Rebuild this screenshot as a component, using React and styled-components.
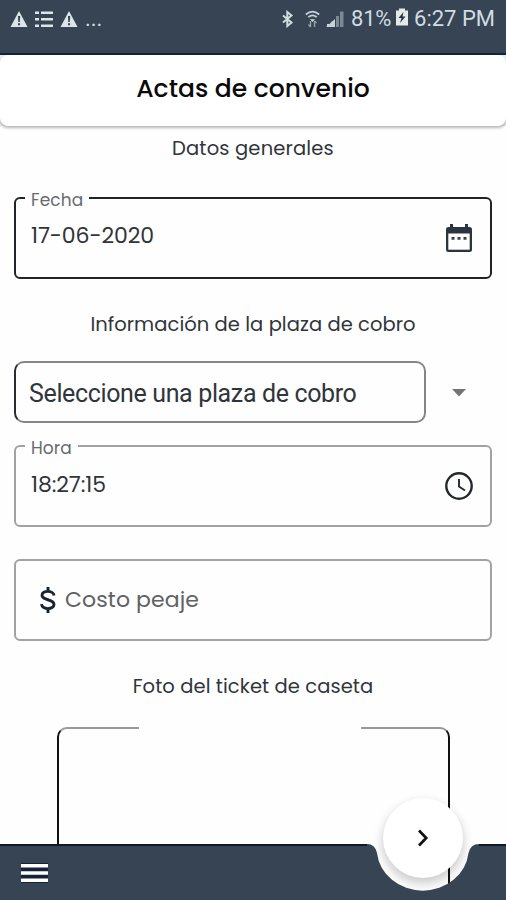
import React from 'react'
import styled, { createGlobalStyle } from 'styled-components';

const GlobalStyle = createGlobalStyle`
*, *::before, *::after{
    box-sizing: border-box;
}
body{
    margin: 0;
    background-color: #fefefe;
    font-family: 'Poppins', 'Inter', sans-serif;
    color: #30353b;
}
`

const Screen = styled.div`
position: relative;
width: 506px;
height: 900px;
overflow: hidden;
display: flex;
flex-direction: column;
background-color: #fefefe;
`

const StatusBar = styled.div`
flex: none;
height: 55px;
padding: 8px 11px 0 10px;
display: flex;
justify-content: space-between;
align-items: flex-start;
background-color: #364453;
border-bottom: 2px solid #10253d;
color: #d0dce2;
font-family: 'Roboto', sans-serif;
font-size: 22px;
line-height: 22px;
`

const StatusGroup = styled.div`
display: flex;
align-items: center;
height: 22px;
gap: ${props => props.$gap || '0'};
`

const StatusText = styled.span`
white-space: nowrap;
letter-spacing: ${props => props.$spacing || '0'};
margin-left: ${props => props.$left || '0'};
`

const HeaderArea = styled.header`
flex: none;
height: 71px;
background-color: #e9edf0;
`

const Header = styled.div`
height: 71px;
padding-bottom: 4px;
display: flex;
align-items: center;
justify-content: center;
background-color: #fff;
border-radius: 8px;
box-shadow: 0 2px 3px rgba(0, 0, 0, 0.28);
`

const Title = styled.h1`
margin: 0;
font-size: 25px;
line-height: 33px;
font-weight: 500;
letter-spacing: 0.03px;
color: #0a0a0a;
`

const Content = styled.main`
flex: 1;
min-height: 0;
display: flex;
flex-direction: column;
padding: 9px 14px 0;
`

const SectionTitle = styled.h2`
flex: none;
margin: ${props => props.$margin || '0'};
font-size: 19.5px;
line-height: 28px;
font-weight: 400;
text-align: center;
white-space: nowrap;
letter-spacing: ${props => props.$spacing};
`

const Field = styled.div`
position: relative;
flex: none;
height: 82px;
margin-top: ${props => props.$top};
padding: ${props => props.$padding || '0 17px 0 15px'};
display: flex;
align-items: center;
justify-content: space-between;
border: 2px solid ${props => props.$active ? '#202327' : '#a2a2a2'};
border-radius: 6px;
`

const FieldLabel = styled.span`
position: absolute;
top: -10px;
left: 9px;
padding: 0 6px 0 6px;
background-color: #fefefe;
font-size: 17px;
line-height: 22px;
letter-spacing: ${props => props.$spacing};
color: #686b6e;
`

const Value = styled.span`
font-size: 22px;
line-height: 28px;
letter-spacing: ${props => props.$spacing};
padding-bottom: ${props => props.$bottom || '4px'};
`

const Placeholder = styled(Value)`
flex: 1;
padding: 0 0 1px 9px;
color: #606264;
`

const SelectRow = styled.div`
flex: none;
display: flex;
align-items: center;
justify-content: space-between;
margin-top: 22px;
padding-right: 26px;
`

const Select = styled.div`
width: 412px;
height: 62px;
padding: 3px 13px 0;
display: flex;
align-items: center;
border: 2px solid #858585;
border-left-color: #292b2e;
border-radius: 10px;
font-family: 'Roboto', sans-serif;
font-size: 25px;
letter-spacing: -0.36px;
white-space: nowrap;
`

const PhotoFrame = styled.div`
flex: none;
position: relative;
width: 393px;
height: 240px;
margin: 26px 0 0 43px;
border: 2px solid #111;
border-top-color: #999;
border-radius: 10px;
`

const FrameGap = styled.div`
position: absolute;
top: -2px;
left: 80px;
width: 222px;
height: 2px;
background-color: #fefefe;
`

const BottomBar = styled.nav`
position: absolute;
left: 0;
right: 0;
bottom: 0;
height: 56px;
display: flex;
`

const BarPart = styled.div`
width: ${props => props.$width || 'auto'};
flex: ${props => props.$width ? 'none' : '1'};
padding-left: 21px;
display: flex;
align-items: center;
background-color: #364453;
border-top: 2px solid #10192b;
`

const NextButton = styled.button`
position: absolute;
left: 383px;
top: 798px;
width: 80px;
height: 80px;
padding: 0;
border: none;
border-radius: 50%;
display: flex;
align-items: center;
justify-content: center;
background-color: #fff;
box-shadow: 0 4px 8px rgba(0, 0, 0, 0.12), 0 6px 12px 2px rgba(0, 0, 0, 0.09);
`

const Notch = styled.svg`
flex: none;
display: block;
`

const Warning = () => (
    <svg width="18" height="18" viewBox="0 0 18 18">
        <path d="M9 1L17.5 17H.5z" fill="#dce6ea" />
        <path d="M8 6h2.2l-.4 6H8.3zM8 13.3h2.1v2H8z" fill="#364453" />
    </svg>
)

const List = () => (
    <svg width="18" height="18" viewBox="0 0 18 18">
        <path d="M0 1.5h4V4H0zM6 1.5h12V4H6zM0 8h4v2.5H0zM6 8h12v2.5H6zM0 14.5h4V17H0zM6 14.5h12V17H6z" fill="#dce6ea" />
    </svg>
)

const Bluetooth = () => (
    <svg width="13" height="18" viewBox="0 0 13 18">
        <path d="M2 5.5l8.500 7-4.200 3.500V2l4.200 3.500-8.500 7" fill="none" stroke="#d0dce2" strokeWidth="2" />
    </svg>
)

const Wifi = () => (
    <svg width="15" height="18" viewBox="0 0 15 18">
        <path d="M.8 4.5Q7.5-1.2 14.2 4.5M3.3 7.2Q7.5 3.6 11.7 7.2" fill="none" stroke="#c5d1d6" strokeWidth="1.7" />
        <path d="M5 9.2h5L7.5 12z" fill="#d0dce2" />
        <path d="M5.5 11v6M3.5 14.5l2 2.5M9.5 17v-6M11.5 13l-2-2" fill="none" stroke="#94a1aa" strokeWidth="1.4" />
    </svg>
)

const Signal = () => (
    <svg width="18" height="18" viewBox="0 0 18 18">
        <path d="M1 14h3v3H1zM5.5 11.5H9V17H5.5z" fill="#d0dce2" />
        <path d="M10 6h3v11h-3zM14 1.5h3.5V17H14z" fill="#7b8993" />
        <path d="M0 17L9 9v8z" fill="#c7d2d7" />
    </svg>
)

const Battery = () => (
    <svg width="12" height="18" viewBox="0 0 12 18">
        <path d="M0 2.5h3V.5h6v2h3v15H0z" fill="#e5e9e8" />
        <path d="M7.5 4l-5 6h3L4 15l5.500-6.500h-3z" fill="#27333f" />
    </svg>
)

const Calendar = () => (
    <svg width="27" height="30" viewBox="0 0 27 30">
        <path d="M4 1h3v3h12V1h3v3h1.500Q26 4 26 6.500v20Q26 29 23.500 29h-21Q0 29 0 26.500v-20Q0 4 2.500 4H4z" fill="#2c3442" />
        <path d="M2.300 10.500h21.400v16.200H2.300z" fill="#fefefe" />
        <path d="M5.500 14h3v2.800h-3zM11.500 14h3v2.800h-3zM17.500 14h3v2.800h-3z" fill="#3b4149" />
    </svg>
)

const Clock = () => (
    <svg width="28" height="28" viewBox="0 0 28 28">
        <circle cx="14" cy="14" r="12.7" fill="none" stroke="#24282d" strokeWidth="2.4" />
        <path d="M14 7v7.500l6 4" fill="none" stroke="#24282d" strokeWidth="1.9" />
    </svg>
)

const Caret = () => (
    <svg width="14" height="10" viewBox="0 0 14 10">
        <path d="M0 2h14L7 9.500z" fill="#747474" />
    </svg>
)

const Dollar = () => (
    <svg width="16" height="26" viewBox="0 0 16 26">
        <path d="M14 8.500C13.500 3 2 3 2 8.300 2 14 14 11.500 14 17.500 14 23 2 23 1.500 17.200M8 0v5M8 21v5" fill="none" stroke="#172331" strokeWidth="2.9" />
    </svg>
)

const Menu = () => (
    <svg width="27" height="20" viewBox="0 0 27 20">
        <path d="M0 0h27v20H0z" fill="#14233a" />
        <path d="M0 1h27v3.500H0zM0 8.200h27v3.500H0zM0 15.400h27v3.500H0z" fill="#fff" />
    </svg>
)

const Chevron = () => (
    <svg width="12" height="18" viewBox="0 0 12 18">
        <path d="M2 1.500L9.200 9 2 16.500" fill="none" stroke="#111" strokeWidth="2.7" />
    </svg>
)

const App = () => {
    return (
        <Screen>
            <GlobalStyle />
            <StatusBar>
                <StatusGroup $gap="7px">
                    <Warning />
                    <List />
                    <Warning />
                    <StatusText>...</StatusText>
                </StatusGroup>
                <StatusGroup>
                    <StatusGroup $gap="6px">
                        <StatusGroup $gap="11px">
                            <Bluetooth />
                            <Wifi />
                        </StatusGroup>
                        <Signal />
                    </StatusGroup>
                    <StatusText $left="7px" $spacing="-0.3px">81%</StatusText>
                    <StatusText $left="5px"><Battery /></StatusText>
                    <StatusText $left="6px">6:27 PM</StatusText>
                </StatusGroup>
            </StatusBar>
            <HeaderArea>
                <Header>
                    <Title>Actas de convenio</Title>
                </Header>
            </HeaderArea>
            <Content>
                <SectionTitle $spacing="0.17px">Datos generales</SectionTitle>
                <Field $active $top="34px">
                    <FieldLabel $spacing="0.1px">Fecha</FieldLabel>
                    <Value $spacing="-0.1px">17-06-2020</Value>
                    <Calendar />
                </Field>
                <SectionTitle $margin="32px 0 0" $spacing="0.06px">Información de la plaza de cobro</SectionTitle>
                <SelectRow>
                    <Select>Seleccione una plaza de cobro</Select>
                    <Caret />
                </SelectRow>
                <Field $top="22px">
                    <FieldLabel $spacing="0.1px">Hora</FieldLabel>
                    <Value $spacing="-0.1px" $bottom="2px">18:27:15</Value>
                    <Clock />
                </Field>
                <Field $top="32px" $padding="0 17px 0 24px">
                    <Dollar />
                    <Placeholder $spacing="0.1px">Costo peaje</Placeholder>
                </Field>
                <SectionTitle $margin="32px 0 0" $spacing="0.08px">Foto del ticket de caseta</SectionTitle>
                <PhotoFrame>
                    <FrameGap />
                </PhotoFrame>
            </Content>
            <NextButton aria-label="Siguiente">
                <Chevron />
            </NextButton>
            <BottomBar>
                <BarPart $width="367px">
                    <Menu />
                </BarPart>
                <Notch width="112" height="56" viewBox="0 0 112 56">
                    <path d="M0 0Q8 0 10 9A46 42 0 0 0 101.500 9Q103.500 0 112 0V56H0z" fill="#364453" />
                </Notch>
                <BarPart />
            </BottomBar>
        </Screen>
    )
}

export default App
